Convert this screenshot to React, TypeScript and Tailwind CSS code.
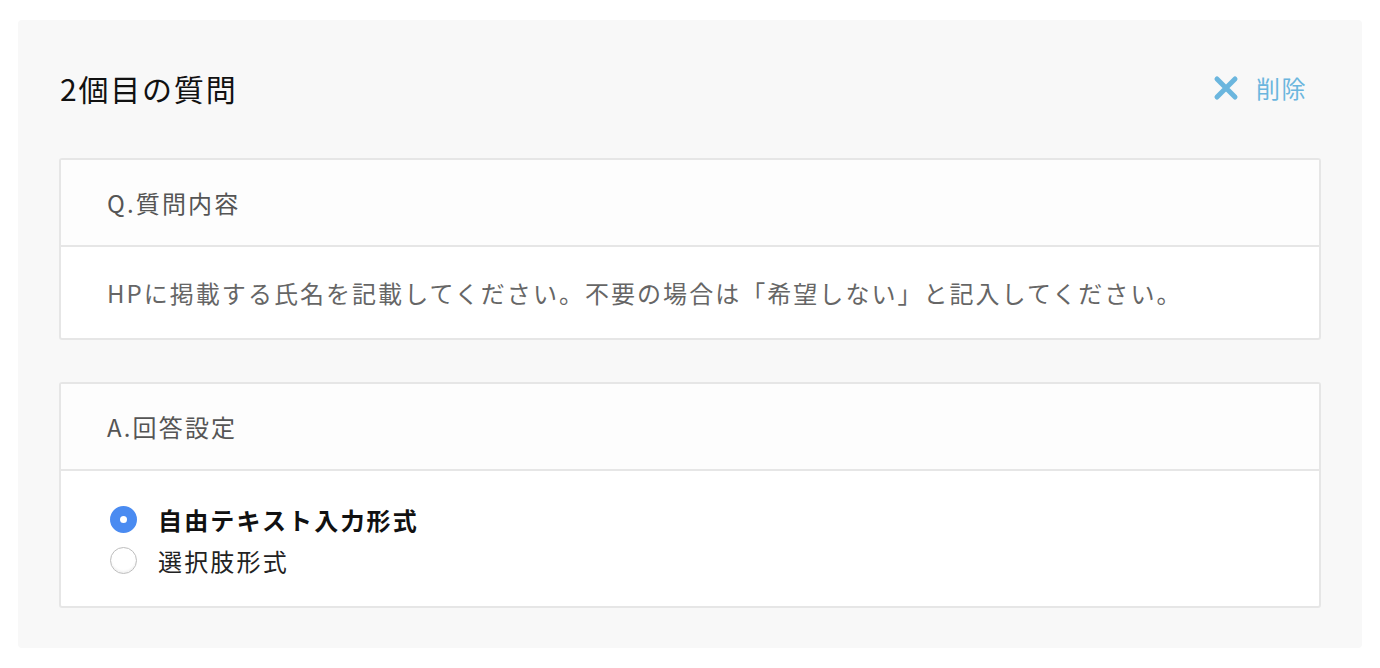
import { useState } from "react"

const font = { fontFamily: '"Noto Sans CJK JP", "Noto Sans", sans-serif' }

function DeleteIcon() {
  return (
    <svg width="26" height="26" viewBox="0 0 26 26" fill="none" aria-hidden="true">
      <path d="M4 4L22 22M22 4L4 22" stroke="#6bb6de" strokeWidth="5" strokeLinecap="round" />
    </svg>
  )
}

function Radio({ checked }: { checked: boolean }) {
  if (checked) {
    return (
      <span className="flex size-[27px] shrink-0 items-center justify-center rounded-full bg-[#4a8bf1]">
        <span className="size-[7px] rounded-full bg-white" />
      </span>
    )
  }
  return (
    <span className="size-[27px] shrink-0 rounded-full border border-[#bdbdbd] bg-white shadow-[inset_0_-2px_2px_rgba(0,0,0,0.05)]" />
  )
}

function SectionCard({ title, children }: { title: string; children: React.ReactNode }) {
  return (
    <div className="rounded-[3px] border-2 border-[#e6e6e6] bg-white">
      <div className="flex h-[87px] items-center border-b-2 border-[#e6e6e6] bg-[#fdfdfd] px-[46px] text-[24px] tracking-[0.09em] text-[#555]">
        {title}
      </div>
      {children}
    </div>
  )
}

const answerTypes = ["自由テキスト入力形式", "選択肢形式"]

export default function App() {
  const [selected, setSelected] = useState(0)

  return (
    <div className="min-h-screen bg-white p-[18px] pt-[20px]" style={font}>
      <div className="rounded-[4px] bg-[#f8f8f8] px-[41px] pt-[42px] pb-[40px]">
        <div className="mb-[44px] flex h-[52px] items-center justify-between pr-[14px]">
          <h2 className="pl-px text-[30px] tracking-[0.06em] text-[#111]">2個目の質問</h2>
          <button className="flex items-center gap-[17px] text-[24px] tracking-[0.06em] text-[#6bb6de]">
            <DeleteIcon />
            削除
          </button>
        </div>

        <SectionCard title="Q.質問内容">
          <div className="flex h-[91px] items-center px-[46px] text-[24px] tracking-[0.085em] text-[#666]">
            HPに掲載する氏名を記載してください。不要の場合は「希望しない」と記入してください。
          </div>
        </SectionCard>

        <div className="mt-[42px]">
          <SectionCard title="A.回答設定">
            <div className="flex flex-col px-[49px] pt-[28px] pb-[25px]">
              {answerTypes.map((label, i) => (
                <label
                  key={label}
                  className="flex h-[41px] cursor-pointer items-center gap-[21px]"
                  onClick={() => setSelected(i)}
                >
                  <Radio checked={selected === i} />
                  <span
                    className={
                      selected === i
                        ? "text-[24px] font-bold tracking-[0.09em] text-[#111]"
                        : "text-[24px] tracking-[0.09em] text-[#222]"
                    }
                  >
                    {label}
                  </span>
                </label>
              ))}
            </div>
          </SectionCard>
        </div>
      </div>
    </div>
  )
}
